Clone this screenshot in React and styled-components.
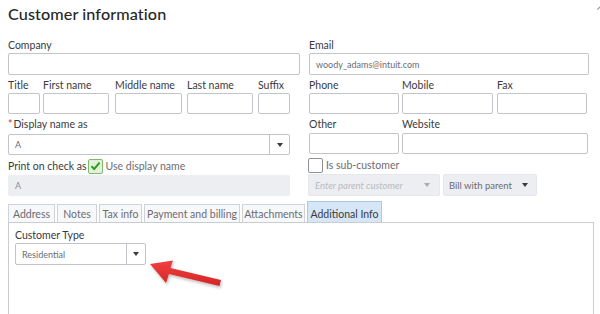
import React from "react";
import styled, { createGlobalStyle } from "styled-components";

const Global = createGlobalStyle`
  html, body { margin: 0; padding: 0; background: #fff; }
  body { font-family: "Lato", "Open Sans", sans-serif; color: #393a3d; width: 600px; height: 314px; overflow: hidden; }
  * { box-sizing: border-box; }
`;

const Page = styled.div`
  position: relative;
  width: 600px;
  height: 314px;
  overflow: hidden;
  padding: 0 0 0 8px;
`;

const Title = styled.h1`
  margin: 0;
  height: 30px;
  padding-top: 4px;
  font-size: 16.2px;
  line-height: 20px;
  font-weight: 500;
  color: #262626;
  letter-spacing: 0.1px;
`;

const Close = styled.div`
  position: absolute;
  right: -4px;
  top: 2px;
  width: 8px;
  height: 8px;
  &::before {
    content: "";
    position: absolute;
    left: 0; top: 4px;
    width: 9px; height: 1px;
    background: #8d9096;
    transform: rotate(-45deg);
  }
`;

const Columns = styled.div`
  display: flex;
  gap: 9px;
`;

const Col = styled.div`
  display: flex;
  flex-direction: column;
  width: ${(p) => p.$w}px;
`;

const Row = styled.div`
  display: flex;
  gap: ${(p) => p.$gap ?? 3}px;
  margin-top: ${(p) => p.$mt ?? 0}px;
`;

const Field = styled.div`
  display: flex;
  flex-direction: column;
  width: ${(p) => (p.$w ? `${p.$w}px` : "auto")};
  flex: ${(p) => (p.$w ? "none" : "1")};
  margin-left: ${(p) => p.$ml ?? 0}px;
`;

const Label = styled.div`
  display: block;
  font-size: 10.5px;
  line-height: 14px;
  height: 14px;
  margin-bottom: ${(p) => p.$mb ?? 1}px;
  color: #393a3d;
  white-space: nowrap;
`;

const Star = styled.span`
  color: #d52b1e;
  margin-right: 1px;
`;

const Input = styled.div`
  height: ${(p) => p.$h ?? 22}px;
  border: 1px solid ${(p) => (p.$disabled ? "#eceef1" : "#c1c4c9")};
  border-radius: 2px;
  background: ${(p) => (p.$disabled ? "#eceef1" : "#fff")};
  font-size: 9px;
  color: ${(p) => (p.$disabled ? "#8d9096" : "#6b6c72")};
  display: flex;
  align-items: center;
  padding-left: 6px;
`;

const Select = styled.div`
  height: ${(p) => p.$h ?? 21}px;
  width: ${(p) => p.$w}px;
  border: 1px solid ${(p) => (p.$disabled ? "#e5e7ea" : "#c1c4c9")};
  border-radius: 2px;
  background: ${(p) => (p.$disabled ? "#eceef1" : "#fff")};
  display: flex;
  align-items: stretch;
  font-size: ${(p) => p.$fs ?? 9}px;
  color: #6b6c72;
`;

const SelectText = styled.span`
  flex: 1;
  display: flex;
  align-items: center;
  padding-left: ${(p) => p.$pl ?? 6}px;
  font-style: ${(p) => (p.$italic ? "italic" : "normal")};
  color: ${(p) => p.$color ?? "#6b6c72"};
  white-space: nowrap;
`;

const Caret = styled.span`
  width: ${(p) => p.$w ?? 19}px;
  border-left: ${(p) => (p.$divider ? "1px solid #c1c4c9" : "none")};
  display: flex;
  align-items: center;
  justify-content: center;
  &::after {
    content: "";
    border-left: 3px solid transparent;
    border-right: 3px solid transparent;
    border-top: 4px solid ${(p) => p.$color ?? "#393a3d"};
  }
`;

const CheckRow = styled.div`
  display: flex;
  align-items: center;
  height: 16px;
  margin-top: ${(p) => p.$mt ?? 0}px;
  font-size: 10.5px;
  color: #393a3d;
  white-space: nowrap;
`;

const Box = styled.span`
  width: 15px;
  height: 15px;
  border: 1px solid ${(p) => (p.$checked ? "#7fb86b" : "#8d9096")};
  background: ${(p) => (p.$checked ? "#e3f1dc" : "#fff")};
  border-radius: 2px;
  margin: 0 ${(p) => p.$mr ?? 3}px 0 ${(p) => p.$ml ?? 0}px;
  display: inline-flex;
  align-items: center;
  justify-content: center;
`;

const Light = styled.span`
  color: #6b6c72;
`;

const Tabs = styled.div`
  display: flex;
  gap: 2px;
  margin-top: 5px;
  align-items: flex-end;
  height: 21px;
`;

const Tab = styled.div`
  width: ${(p) => p.$w}px;
  height: ${(p) => (p.$active ? 21 : 18)}px;
  border: 1px solid ${(p) => (p.$active ? "#a9c9e8" : "#cfd2d6")};
  border-bottom: none;
  background: ${(p) => (p.$active ? "#d5e6f7" : "#f7f8fa")};
  font-size: 10.5px;
  color: ${(p) => (p.$active ? "#393a3d" : "#6b6c72")};
  display: flex;
  align-items: center;
  justify-content: center;
  padding-top: ${(p) => (p.$active ? 3 : 0)}px;
  white-space: nowrap;
`;

const Panel = styled.div`
  width: 586px;
  height: 100px;
  border: 1px solid #c9ccd1;
  border-bottom: none;
  padding: 5px 6px;
`;

const ArrowSvg = styled.svg`
  position: absolute;
  left: 145px;
  top: 255px;
  overflow: visible;
`;

export default function App() {
  return (
    <Page>
      <Global />
      <Close />
      <Title>Customer information</Title>
      <Columns>
        <Col $w={292}>
          <Row $mt={8}>
            <Field>
              <Label>Company</Label>
              <Input />
            </Field>
          </Row>
          <Row $mt={3} $gap={3}>
            <Field $w={32}>
              <Label>Title</Label>
              <Input $h={21} />
            </Field>
            <Field $w={66}>
              <Label>First name</Label>
              <Input $h={21} />
            </Field>
            <Field $w={67} $ml={3}>
              <Label>Middle name</Label>
              <Input $h={21} />
            </Field>
            <Field $w={66} $ml={2}>
              <Label>Last name</Label>
              <Input $h={21} />
            </Field>
            <Field $w={32} $ml={2}>
              <Label>Suffix</Label>
              <Input $h={21} />
            </Field>
          </Row>
          <Row $mt={3}>
            <Field $w={282}>
              <Label $mb={3}>
                <Star>*</Star>Display name as
              </Label>
              <Select $w={282} $h={21} $fs={9}>
                <SelectText>A</SelectText>
                <Caret $divider $w={20} />
              </Select>
            </Field>
          </Row>
          <CheckRow $mt={3}>
            Print on check as
            <Box $checked $ml={1} $mr={3}>
              <svg width="11" height="10" viewBox="0 0 11 10">
                <path d="M1.5 5.2 L4.2 8 L9.6 1.6" fill="none" stroke="#2ca01c" strokeWidth="2" />
              </svg>
            </Box>
            <Light>Use display name</Light>
          </CheckRow>
          <Row $mt={1}>
            <Field $w={282}>
              <Input $h={21} $disabled>A</Input>
            </Field>
          </Row>
        </Col>
        <Col $w={280}>
          <Row $mt={8}>
            <Field>
              <Label>Email</Label>
              <Input>woody_adams@intuit.com</Input>
            </Field>
          </Row>
          <Row $mt={3} $gap={3}>
            <Field $w={90}>
              <Label>Phone</Label>
              <Input $h={21} />
            </Field>
            <Field $w={91}>
              <Label>Mobile</Label>
              <Input $h={21} />
            </Field>
            <Field $w={90} $ml={1}>
              <Label>Fax</Label>
              <Input $h={21} />
            </Field>
          </Row>
          <Row $mt={3} $gap={3}>
            <Field $w={90}>
              <Label $mb={2}>Other</Label>
              <Input $h={21} />
            </Field>
            <Field $w={186}>
              <Label $mb={2}>Website</Label>
              <Input $h={21} />
            </Field>
          </Row>
          <CheckRow $mt={3}>
            <Box $ml={-1} $mr={3} />
            <Light>Is sub-customer</Light>
          </CheckRow>
          <Row $mt={1} $gap={3} style={{ marginLeft: -1 }}>
            <Select $w={132} $h={22} $disabled $fs={9.5}>
              <SelectText $italic $color="#b8bbc0" $pl={6}>Enter parent customer</SelectText>
              <Caret $w={24} $color="#a8abb0" />
            </Select>
            <Select $w={94} $h={22} $disabled $fs={9.5}>
              <SelectText $pl={5}>Bill with parent</SelectText>
              <Caret $w={22} />
            </Select>
          </Row>
        </Col>
      </Columns>
      <Tabs>
        <Tab $w={47}>Address</Tab>
        <Tab $w={40}>Notes</Tab>
        <Tab $w={43}>Tax info</Tab>
        <Tab $w={96}>Payment and billing</Tab>
        <Tab $w={63}>Attachments</Tab>
        <Tab $active $w={75}>Additional Info</Tab>
      </Tabs>
      <Panel>
        <Label $mb={1}>Customer Type</Label>
        <Select $w={131} $h={22} $fs={9}>
          <SelectText $pl={6}>Residential</SelectText>
          <Caret $divider $w={19} />
        </Select>
      </Panel>
      <ArrowSvg width="80" height="35" viewBox="0 0 80 35">
        <defs>
          <filter id="sh" x="-20%" y="-40%" width="150%" height="190%">
            <feDropShadow dx="1" dy="2" stdDeviation="1.5" floodColor="#000" floodOpacity="0.25" />
          </filter>
          <linearGradient id="rg" x1="0" y1="0" x2="0" y2="1">
            <stop offset="0" stopColor="#f04040" />
            <stop offset="1" stopColor="#d42626" />
          </linearGradient>
        </defs>
        <path
          d="M5 9 L28 5.5 L25.5 13 L76 25 L74.5 31 L24 19 L21 28 Z"
          fill="url(#rg)"
          filter="url(#sh)"
        />
      </ArrowSvg>
    </Page>
  );
}
